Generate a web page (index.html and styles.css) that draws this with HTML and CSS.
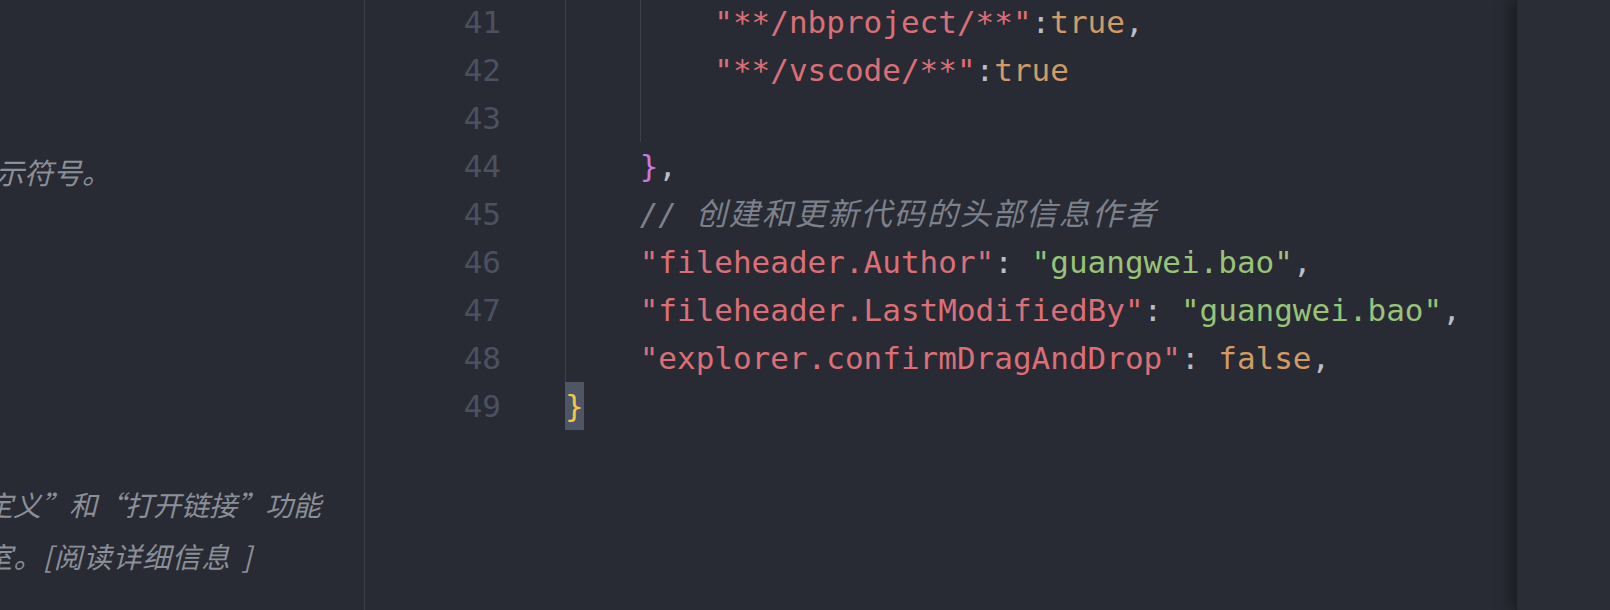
FILE: index.html
```html
<!DOCTYPE html>
<html lang="zh-CN">
<head>
    <meta charset="UTF-8">
    <meta name="viewport" content="width=device-width, initial-scale=1.0">
    <title>settings.json</title>
    <link rel="stylesheet" href="styles.css">
</head>
<body>
    <div class="window">
        <!-- settings description panel, scrolled sideways -->
        <div class="sidebar">
            <p class="desc desc-top"><span class="cut-a">示符号。</span></p>
            <p class="desc desc-bottom">
                <span class="cut-b">定义”和“打开链接”功能</span>
                <span class="cut-c">室。[阅读详细信息 ]</span>
            </p>
        </div>

        <div class="editor">
            <div class="gutter">
                <div class="num">41</div>
                <div class="num">42</div>
                <div class="num">43</div>
                <div class="num">44</div>
                <div class="num">45</div>
                <div class="num">46</div>
                <div class="num">47</div>
                <div class="num">48</div>
                <div class="num">49</div>
            </div>
            <div class="code">
                <div class="line"><span class="ind"></span><span class="ind"></span><span class="str">"**/nbproject/**"</span><span class="pun">:</span><span class="lit">true</span><span class="pun">,</span></div>
                <div class="line"><span class="ind"></span><span class="ind"></span><span class="str">"**/vscode/**"</span><span class="pun">:</span><span class="lit">true</span></div>
                <div class="line"><span class="ind"></span><span class="ind"></span></div>
                <div class="line"><span class="ind"></span><span class="brace">}</span><span class="pun">,</span></div>
                <div class="line"><span class="ind"></span><span class="comment">// <span class="cjk">创建和更新代码的头部信息作者</span></span></div>
                <div class="line"><span class="ind"></span><span class="str">"fileheader.Author"</span><span class="pun">: </span><span class="val">"guangwei.bao"</span><span class="pun">,</span></div>
                <div class="line"><span class="ind"></span><span class="str">"fileheader.LastModifiedBy"</span><span class="pun">: </span><span class="val">"guangwei.bao"</span><span class="pun">,</span></div>
                <div class="line"><span class="ind"></span><span class="str">"explorer.confirmDragAndDrop"</span><span class="pun">: </span><span class="lit">false</span><span class="pun">,</span></div>
                <div class="line"><span class="cursor">}</span></div>
            </div>
        </div>

        <div class="minimap"></div>
    </div>
</body>
</html>
```
FILE: styles.css
```css
body {
    margin: 0;
    background-color: #282b33;
    overflow: hidden;
}
.window {
    display: flex;
    height: 610px;
    width: 1610px;
}
.sidebar {
    width: 364px;
    flex-shrink: 0;
    border-right: 1px solid #3d4048;
    overflow: hidden;
    padding-top: 146px;
}
.desc {
    margin: 0;
    font-family: "Noto Sans CJK SC", sans-serif;
    font-style: italic;
    font-size: 29px;
    color: #8b8f97;
    white-space: nowrap;
}
.desc span {
    display: block;
}
.desc-top {
    line-height: 50px;
}
.desc-bottom {
    line-height: 51px;
    margin-top: 283px;
    font-size: 28.5px;
}
.cut-a {
    margin-left: -5px;
}
.cut-b {
    margin-left: -15px;
    font-size: 28px;
}
.cut-c {
    margin-left: -16px;
    letter-spacing: 1px;
    word-spacing: 4px;
}
.editor {
    flex: 1;
    display: flex;
    font-family: "DejaVu Sans Mono", "Noto Sans CJK SC", monospace;
    font-size: 31px;
    line-height: 48px;
    overflow: hidden;
}
.gutter {
    width: 200px;
    flex-shrink: 0;
    box-sizing: border-box;
    padding-right: 64px;
    text-align: right;
    color: #4b5161;
    margin-top: -2px;
}
.num {
    height: 48px;
}
.code {
    flex: 1;
    margin-top: -2px;
}
.line {
    height: 48px;
    display: flex;
    white-space: pre;
}
.ind {
    width: 4ch;
    flex-shrink: 0;
    box-sizing: border-box;
    border-left: 1px solid #3c4049;
}
.str {
    color: #db6f77;
}
.val {
    color: #98c379;
}
.lit {
    color: #d19a66;
}
.pun {
    color: #b9bec8;
}
.brace {
    color: #c678dd;
}
.comment {
    color: #7c818b;
    font-style: italic;
}
.comment .cjk {
    letter-spacing: 2px;
}
.cursor {
    color: #f3c843;
    background-color: #4e5566;
    width: 1ch;
}
.minimap {
    width: 93px;
    flex-shrink: 0;
    background-color: #2a2d35;
    border-left: 1px solid #1d1f24;
    box-shadow: -6px 0 14px rgba(0, 0, 0, 0.35);
}
```
